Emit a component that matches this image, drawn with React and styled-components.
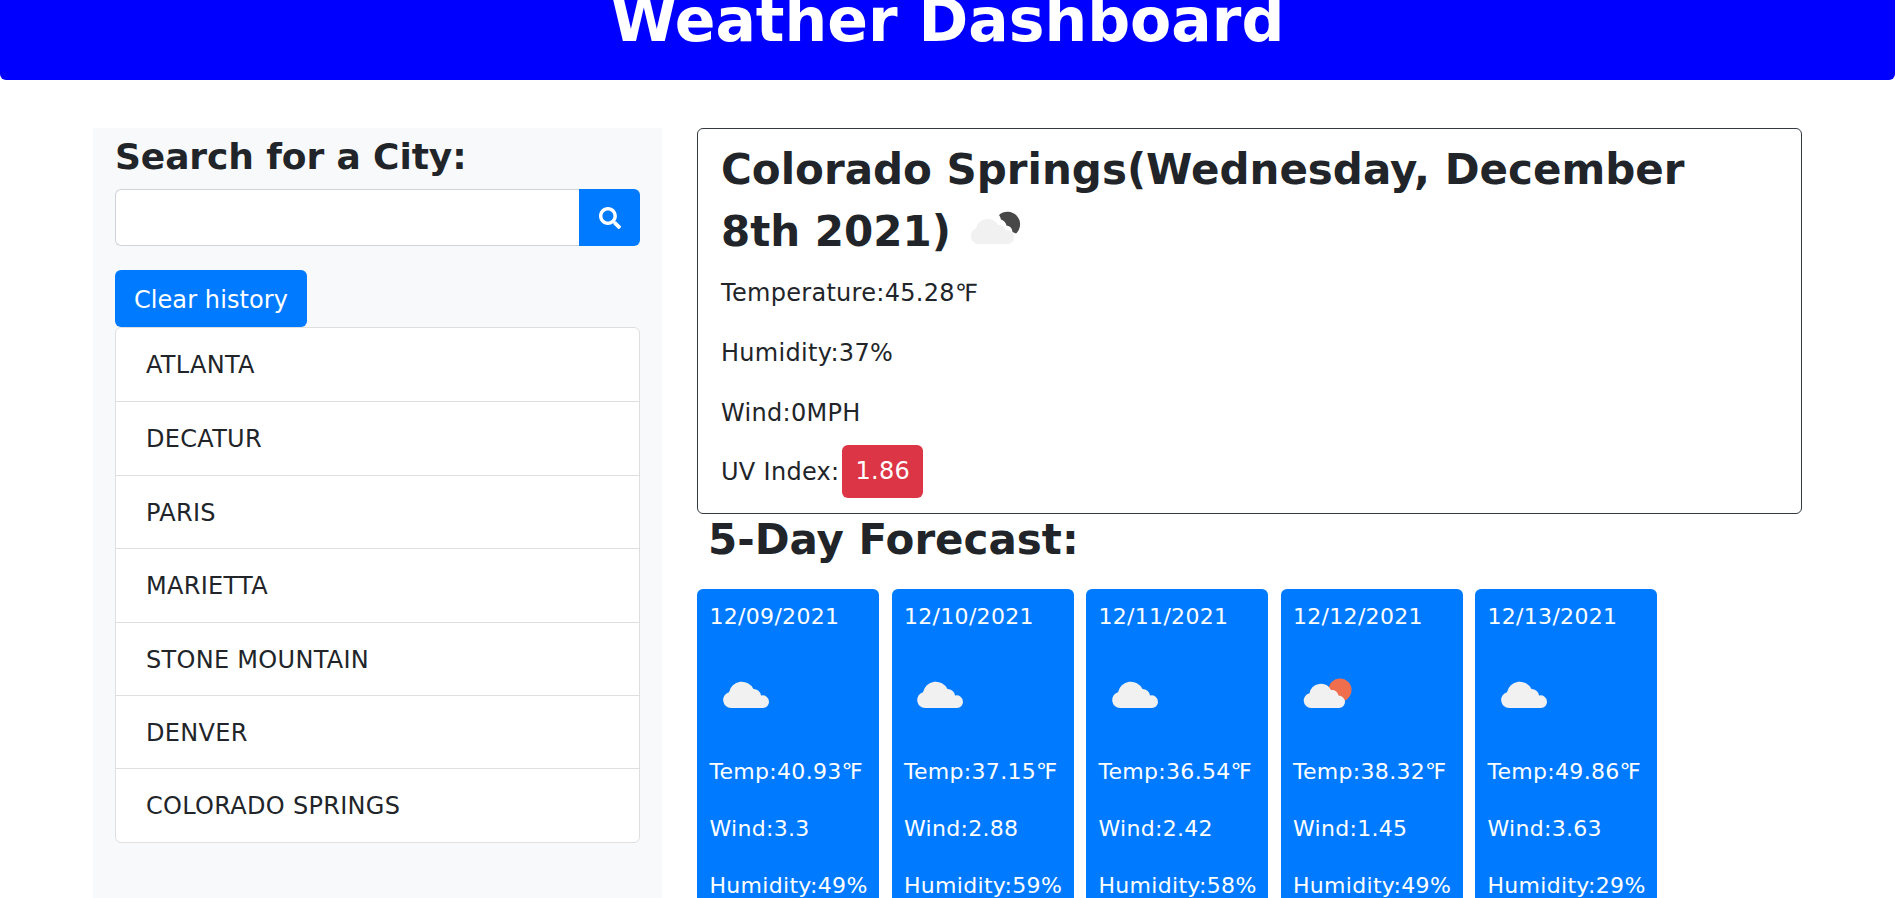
import React from "react";
import styled, { createGlobalStyle } from "styled-components";
import { FaSearch } from "react-icons/fa";

const GlobalStyle = createGlobalStyle`
  html, body {
    margin: 0;
    height: 100%;
    overflow: hidden;
    background: #fff;
  }
  body {
    font-family: "DejaVu Sans", sans-serif;
    font-size: 24px;
    letter-spacing: 0.3px;
    line-height: 1.5;
    color: #212529;
  }
  * { box-sizing: border-box; }
`;

const Header = styled.header`
  display: flex;
  justify-content: center;
  align-items: flex-end;
  height: 80px;
  margin-right: 1px;
  padding-bottom: 24px;
  overflow: hidden;
  background: #0000ff;
  border-radius: 0 0 6px 6px;
`;

const Title = styled.h1`
  margin: 0;
  font-size: 60px;
  letter-spacing: 0;
  line-height: 1.2;
  font-weight: 700;
  color: #fff;
`;

const Page = styled.main`
  display: flex;
  align-items: flex-start;
  gap: 35px;
  padding: 48px 93px 0;
`;

const Sidebar = styled.aside`
  flex: 0 0 569px;
  height: 780px;
  padding: 0 22px;
  background: #f8f9fa;
`;

const SidebarTitle = styled.h3`
  margin: 0 0 8px;
  height: 53px;
  font-size: 36px;
  letter-spacing: -0.1px;
  line-height: 58px;
  font-weight: 700;
`;

const SearchRow = styled.form`
  display: flex;
  height: 57px;
  margin-bottom: 24px;
`;

const SearchInput = styled.input`
  flex: 1;
  min-width: 0;
  border: 1px solid #ced4da;
  border-right: 0;
  border-radius: 6px 0 0 6px;
  background: #fff;
`;

const SearchButton = styled.button`
  display: flex;
  align-items: center;
  justify-content: center;
  width: 61px;
  padding: 0;
  border: 0;
  border-radius: 0 6px 6px 0;
  background: #007bff;
  color: #fff;
  font-size: 22px;
`;

const ClearButton = styled.button`
  display: block;
  width: 192px;
  height: 57px;
  padding: 2px 0 0;
  border: 0;
  border-radius: 6px;
  background: #007bff;
  color: #fff;
  font-family: inherit;
  font-size: 24px;
  letter-spacing: 0.1px;
`;

const CityList = styled.ul`
  margin: 0;
  padding: 0;
  list-style: none;
  background: #fff;
  border: 1px solid #dfdfdf;
  border-radius: 6px;
`;

const CityItem = styled.li`
  height: 73.4px;
  padding: 0 30px;
  line-height: 74px;
  border-top: ${({ $first }) => ($first ? "0" : "1px solid #dfdfdf")};
`;

const Content = styled.section`
  flex: 0 0 1105px;
`;

const CurrentBox = styled.div`
  height: 386px;
  padding: 0 23px;
  border: 1px solid #343a40;
  border-radius: 6px;
`;

const CityHeading = styled.h2`
  margin: 0 0 12px;
  padding-top: 10px;
  font-size: 42px;
  letter-spacing: 0;
  line-height: 62px;
  font-weight: 700;
`;

const Stat = styled.p`
  margin: 0 0 24px;
  height: 36px;
  line-height: 36px;
`;

const UvRow = styled.div`
  display: flex;
  align-items: center;
  height: 53px;
  margin-top: -10px;
`;

const UvBadge = styled.span`
  display: block;
  margin-left: 3px;
  padding: 0 13px;
  height: 53px;
  line-height: 53px;
  background: #dc3545;
  color: #fff;
  border-radius: 6px;
`;

const ForecastTitle = styled.h3`
  margin: 0 0 16px;
  padding-left: 11px;
  height: 59px;
  font-size: 42px;
  letter-spacing: 0;
  line-height: 52px;
  font-weight: 700;
`;

const CardRow = styled.div`
  display: flex;
  gap: 12.5px;
`;

const Card = styled.article`
  flex: 0 0 182px;
  min-width: 0;
  height: 340px;
  padding: 12px 12.5px;
  background: #007bff;
  color: #fff;
  border-radius: 6px;
  font-size: 22px;
`;

const CardDate = styled.div`
  height: 32px;
  line-height: 32px;
`;

const CardIcon = styled.div`
  height: 70px;
  margin: 35px 0 18px;
`;

const CardStat = styled.p`
  margin: 0 0 25px;
  height: 32px;
  line-height: 32px;
  white-space: nowrap;
`;

const IconSvg = styled.svg`
  display: ${({ $inline }) => ($inline ? "inline-block" : "block")};
  margin: ${({ $inline }) => ($inline ? "-30px 0 -25px -8px" : "0")};
`;

const CLOUD = "M22 40a8 8 0 0 1-2-15.700a13 13 0 0 1 24.500-3.300a7.500 7.500 0 0 1 7.500 6.500a6.500 6.500 0 0 1 8 6.500a6 6 0 0 1-6 6z";

// openweather style icons, drawn by hand
const WeatherIcon = ({ kind, inline }) => (
  <IconSvg width="70" height="70" viewBox="0 0 70 70" $inline={inline}>
    {kind === "cloud" && <path d={CLOUD} transform="translate(-1 0)" fill="#f1f1f1" />}
    {kind === "sun" && (
      <>
        <circle cx="47" cy="22" r="11.500" fill="#ee6e4d" />
        <path
          d="M18 40a7.500 7.500 0 0 1-1.500-14.800a11.500 11.500 0 0 1 21.500-3.200a6.500 6.500 0 0 1 7.500 5.500a6.500 6.500 0 0 1 6.500 6.500a6 6 0 0 1-6 6z"
          fill="#f1f1f1"
        />
      </>
    )}
    {kind === "moon" && (
      <>
        <path
          d="M20 43a8 8 0 0 1-2-15.500a12 12 0 0 1 22-3.500a7 7 0 0 1 8 5.500a6.500 6.500 0 0 1 8 7a6 6 0 0 1-6 6.500z"
          fill="#f1f1f1"
        />
        <path
          d="M41 14a12 12 0 0 1 17 18.500l-3.500-1.500a7 7 0 0 0-6-6.500a8 8 0 0 0-5.500-6a11 11 0 0 0-2-4.500z"
          fill="#484848"
        />
      </>
    )}
  </IconSvg>
);

const cities = ["ATLANTA", "DECATUR", "PARIS", "MARIETTA", "STONE MOUNTAIN", "DENVER", "COLORADO SPRINGS"];

const forecast = [
  { date: "12/09/2021", icon: "cloud", temp: "40.93", wind: "3.3", humidity: "49" },
  { date: "12/10/2021", icon: "cloud", temp: "37.15", wind: "2.88", humidity: "59" },
  { date: "12/11/2021", icon: "cloud", temp: "36.54", wind: "2.42", humidity: "58" },
  { date: "12/12/2021", icon: "sun", temp: "38.32", wind: "1.45", humidity: "49" },
  { date: "12/13/2021", icon: "cloud", temp: "49.86", wind: "3.63", humidity: "29" },
];

const App = () => (
  <>
    <GlobalStyle />
    <Header>
      <Title>Weather Dashboard</Title>
    </Header>
    <Page>
      <Sidebar>
        <SidebarTitle>Search for a City:</SidebarTitle>
        <SearchRow onSubmit={(e) => e.preventDefault()}>
          <SearchInput type="text" />
          <SearchButton type="submit" aria-label="search">
            <FaSearch />
          </SearchButton>
        </SearchRow>
        <ClearButton type="button">Clear history</ClearButton>
        <CityList>
          {cities.map((city, i) => (
            <CityItem key={city} $first={i === 0}>{city}</CityItem>
          ))}
        </CityList>
      </Sidebar>
      <Content>
        <CurrentBox>
          <CityHeading>
            Colorado Springs(Wednesday, December 8th 2021) <WeatherIcon kind="moon" inline />
          </CityHeading>
          <Stat>Temperature:45.28℉</Stat>
          <Stat>Humidity:37%</Stat>
          <Stat>Wind:0MPH</Stat>
          <UvRow>
            UV Index:<UvBadge>1.86</UvBadge>
          </UvRow>
        </CurrentBox>
        <ForecastTitle>5-Day Forecast:</ForecastTitle>
        <CardRow>
          {forecast.map((day) => (
            <Card key={day.date}>
              <CardDate>{day.date}</CardDate>
              <CardIcon>
                <WeatherIcon kind={day.icon} />
              </CardIcon>
              <CardStat>Temp:{day.temp}℉</CardStat>
              <CardStat>Wind:{day.wind}</CardStat>
              <CardStat>Humidity:{day.humidity}%</CardStat>
            </Card>
          ))}
        </CardRow>
      </Content>
    </Page>
  </>
);

export default App;
